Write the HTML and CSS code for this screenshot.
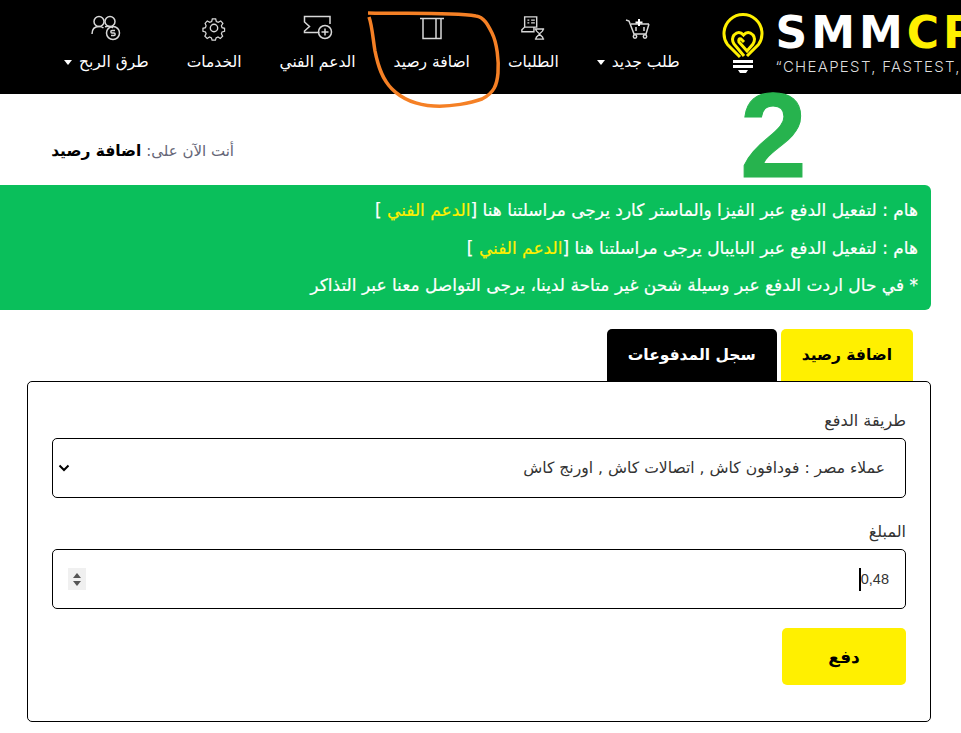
FILE: index.html
```html
<!doctype html>
<html lang="ar">
<head>
	<meta charset="utf-8">
	<title>اضافة رصيد</title>
	<link rel="stylesheet" href="styles.css">
</head>

<body>
<header class="topbar">
	<nav class="nav" dir="rtl">
		<a class="nav-item">
			<svg class="nav-icon" width="26" height="26" viewBox="0 2 26 26"><path d="M1 7l3 1 5 13h12l3-10M6 11h18M11 14v4M19 14v4"/><circle cx="10" cy="23.500" r="1.700"/><circle cx="20" cy="23.500" r="1.700"/><path class="thick" d="M14 6v7M10.500 9.500h7"/></svg>
			<span class="nav-label">طلب جديد <i class="caret"></i></span>
		</a>
		<a class="nav-item">
			<svg class="nav-icon" width="26" height="26" viewBox="0 0 28 28"><path d="M5 2h13v11H5zM2 18v-2l3-3h10v5zM8 5.500h2M12 5.500h4M8 8.500h2M12 8.500h4M16 15h10M16 26h10M17 15c0 4 4 4 4 5.500s-4 1.500-4 5.500M25 15c0 4-4 4-4 5.500s4 1.500 4 5.500"/></svg>
			<span class="nav-label">الطلبات</span>
		</a>
		<a class="nav-item">
			<svg class="nav-icon" width="26" height="26" viewBox="0 0 26 26"><path d="M1 3.500h24M4 3.500v20h18v-20M17 3.500v20"/></svg>
			<span class="nav-label">اضافة رصيد</span>
		</a>
		<a class="nav-item">
			<svg class="nav-icon" width="30" height="26" viewBox="0 1 30 26"><path d="M27 10V2.500H1.500v5.500l5 4.500-5 4.500v1.500h15"/><circle cx="22" cy="18" r="6.500"/><path d="M22 14.500v7M18.500 18h7"/></svg>
			<span class="nav-label">الدعم الفني</span>
		</a>
		<a class="nav-item">
			<svg class="nav-icon" width="24" height="26" viewBox="0 0 26 26"><circle cx="13" cy="13" r="4"/><path d="M11 2h4l.8 3.300 2.300 1 3-1.700 2.600 3-1.800 2.800.8 2.300 3 .8v3.500l-3 .8-.8 2.300 1.500 2.900-2.800 2.700-2.800-1.700-2.300 1-.8 2.800h-4l-.8-2.800-2.300-1-2.800 1.700-2.800-2.700 1.500-2.900-.8-2.300-3-.8v-3.500l3-.8.800-2.300L2.300 7.600l2.600-3 3 1.700 2.300-1z" transform="translate(1.300 1.200) scale(.9)"/></svg>
			<span class="nav-label">الخدمات</span>
		</a>
		<a class="nav-item">
			<svg class="nav-icon" width="30" height="26" viewBox="0 0 30 26"><circle cx="8" cy="6.500" r="5"/><circle cx="19" cy="6.500" r="5"/><path d="M1 19c0-5 3-7.500 7-7.500 2 0 3.500.6 4.500 1.500M14 11.800c3-.8 6-.5 8 1"/><circle cx="22" cy="18" r="6.500"/><path d="M24 15.500h-3c-1.500 0-1.500 2.500 0 2.500h2c1.500 0 1.500 2.500 0 2.500h-3"/></svg>
			<span class="nav-label">طرق الربح <i class="caret"></i></span>
		</a>
	</nav>
	<div class="logo">
		<svg class="logo-bulb" width="42" height="62" viewBox="0 0 42 62">
			<path class="bulb" d="M18 44L5.500 31.500A19 19 0 1 1 36.500 31.500L25 43"/>
			<path class="bulb" d="M22 43L12 31Q9 26 12 22Q17 17 21.500 22Q26 17 31 22Q34 26 31 31L25 38L17 29Q16 25 19 26L22 29"/>
			<path class="bulb-foot" d="M11 47h20v3H11zM11 52h20v3H11zM16 57h10l-2 3h-6z"/>
		</svg>
		<div class="logo-text">
			<div class="logo-name">SMM<span class="logo-accent">CP</span></div>
			<div class="logo-tag">“CHEAPEST, FASTEST, BEST</div>
		</div>
	</div>
</header>

<main class="page">
	<p class="crumb" dir="rtl">أنت الآن على: <b>اضافة رصيد</b></p>

	<div class="notice" dir="rtl">
		<p>هام : لتفعيل الدفع عبر الفيزا والماستر كارد يرجى مراسلتنا هنا [<a>الدعم الفني</a> ]</p>
		<p>هام : لتفعيل الدفع عبر البايبال يرجى مراسلتنا هنا [<a>الدعم الفني</a> ]</p>
		<p>* في حال اردت الدفع عبر وسيلة شحن غير متاحة لدينا، يرجى التواصل معنا عبر التذاكر</p>
	</div>

	<div class="tabs" dir="rtl">
		<a class="tab tab-active">اضافة رصيد</a>
		<a class="tab">سجل المدفوعات</a>
	</div>

	<form class="card" dir="rtl">
		<label class="field-label">طريقة الدفع</label>
		<div class="control control-select">
			<span>عملاء مصر : فودافون كاش , اتصالات كاش , اورنج كاش</span>
			<svg class="chevron" width="12" height="8" viewBox="0 0 12 8"><path d="M1.500 1.500L6 6l4.500-4.500"/></svg>
		</div>
		<label class="field-label field-label-gap">المبلغ</label>
		<div class="control control-input">
			<span class="amount">0,48</span>
			<i class="text-caret"></i>
			<span class="spinner"><i class="spin-up"></i><i class="spin-down"></i></span>
		</div>
		<button class="pay" type="button">دفع</button>
	</form>
</main>

<div class="big-two">2</div>
<svg class="scribble" width="140" height="105" viewBox="0 0 140 105"><path d="M2 2C40 3 85 1 110 5C118 6 122 14 126 22C131 32 133 50 132 62C131 74 128 82 116 88C105 92 85 96 68 95C50 94 36 88 26 78C16 68 12 55 9 40C7 28 6 14 3 6"/></svg>
</body>
</html>
```

FILE: styles.css
```css
* {box-sizing: border-box;}
html, body {height: 100%;}
body {margin: 0; overflow: hidden; background: #fff; color: #111; font-family: "DejaVu Sans", sans-serif; font-size: 14px;}
p {margin: 0;}

.topbar {display: flex; height: 94px; background: #000; overflow: hidden;}
.nav {display: flex; margin-left: 45px; margin-right: 24px; flex-shrink: 0;}
.nav-item {display: flex; flex-direction: column; align-items: center; justify-content: flex-end; height: 71px; padding: 0 19px; color: #fff; white-space: nowrap; font-size: 15.500px; line-height: 18px;}
.nav-icon {flex-shrink: 0; margin-bottom: 12px; fill: none; stroke: #d8d8d8; stroke-width: 1.500;}
.nav-icon .thick {stroke: #fff; stroke-width: 2;}
.nav-label {display: block;}
.caret {display: inline-block; margin-right: 2px; vertical-align: middle; border: 4px solid transparent; border-top: 5px solid #fff; border-bottom: 0;}

.logo {display: flex; flex-shrink: 0; gap: 11px; padding-top: 13px;}
.logo-bulb {flex-shrink: 0;}
.bulb {fill: none; stroke: #fff000; stroke-width: 3;}
.bulb-foot {fill: #fff;}
.logo-name {font-family: "DejaVu Sans", sans-serif; font-size: 44px; font-weight: 700; line-height: 40px; color: #fff; letter-spacing: 4px;}
.logo-accent {color: #fff000;}
.logo-tag {font-family: "Inter", "Liberation Sans", sans-serif; margin-top: 5px; font-size: 15px; font-weight: 300; line-height: 18px; color: #ddd; white-space: nowrap; letter-spacing: 1.300px;}

.crumb {height: 91px; padding: 47px 0 0; width: 234px; color: #667; font-size: 15px; line-height: 20px;}
.crumb b {color: #000; font-size: 15.500px;}

.notice {width: 931px; height: 125px; padding: 7px 13px 0 0; background: #0abf5b; border-radius: 0 6px 6px 0; color: #fff; font-size: 17px; -webkit-text-stroke: .2px #fff; line-height: 37.500px;}
.notice a {color: #fff000; -webkit-text-stroke: .2px #fff000;}

.tabs {display: flex; gap: 4px; margin-top: 19px; width: 913px; height: 52px;}
.tab {display: flex; align-items: center; justify-content: center; padding: 0 21px; background: #000; border-radius: 5px 5px 0 0; color: #fff; font-size: 15.500px; font-weight: 700;}
.tab-active {background: #fff000; color: #000;}

.card {display: flex; flex-direction: column; width: 904px; height: 341px; margin-left: 27px; padding: 29px 24px 0; border: 1px solid #000; border-radius: 5px;}
.field-label {display: block; height: 27px; font-size: 16px; line-height: 20px; color: #333;}
.field-label-gap {margin-top: 24px;}
.control {display: flex; align-items: center; height: 60px; padding: 0 16px 0 15px; border: 1px solid #000; border-radius: 5px; color: #333; font-size: 15.600px;}
.control-select {justify-content: space-between; padding-left: 5px; padding-right: 20px;}
.chevron {fill: none; stroke: #000; stroke-width: 2;}
.amount {font-size: 14.500px; font-family: "Liberation Sans", sans-serif;}
.text-caret {display: block; width: 2px; height: 23px; background: #000;}
.spinner {display: flex; flex-direction: column; align-items: center; justify-content: center; gap: 3px; width: 18px; height: 22px; margin-right: auto; background: #f0f0f0;}
.spin-up {border: 4px solid transparent; border-bottom: 5px solid #555; border-top: 0;}
.spin-down {border: 4px solid transparent; border-top: 5px solid #555; border-bottom: 0;}
.pay {align-self: flex-start; width: 124px; height: 57px; margin-top: 19px; background: #fff000; border: 0; border-radius: 5px; color: #000; font-family: inherit; font-size: 17px; font-weight: 700;}

.big-two {position: absolute; left: 740px; top: 70px; font-family: "Liberation Sans", sans-serif; font-weight: 700; font-size: 120px; line-height: 130px; color: #27b34e; -webkit-text-stroke: 1px #27b34e;}
.scribble {position: absolute; left: 366px; top: 11px; fill: none; stroke: #f58025; stroke-width: 3.500;}
```
